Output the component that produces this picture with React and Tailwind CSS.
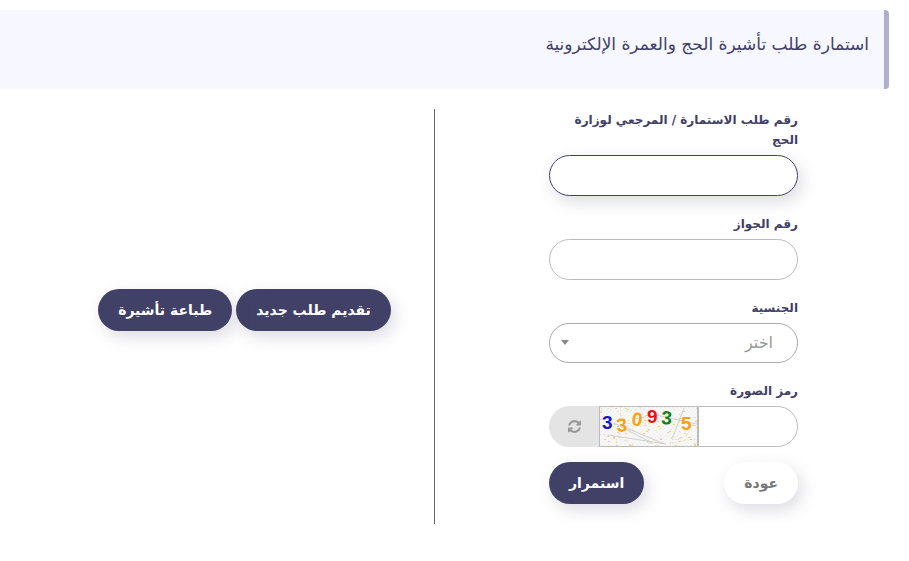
import React from "react";

const DIGITS = [
  { d: "3", x: 2, y: 22, fill: "#1414d2", rotate: 0 },
  { d: "3", x: 17, y: 25, fill: "#f5a314", rotate: -4 },
  { d: "0", x: 31, y: 18, fill: "#f5a314", rotate: 8 },
  { d: "9", x: 47, y: 16, fill: "#e61414", rotate: 0 },
  { d: "3", x: 61, y: 17, fill: "#128012", rotate: 4 },
  { d: "5", x: 81, y: 23, fill: "#f5a314", rotate: 0 },
];

function noise(n) {
  const v = Math.sin(n * 12.9898) * 43758.5453;
  return v - Math.floor(v);
}

const SPECKS = Array.from({ length: 230 }, (_, i) => ({
  x: Math.floor(noise(i + 1) * 97),
  y: Math.floor(noise(i + 501) * 39),
  w: 1 + (i % 2),
  o: 0.2 + (i % 4) * 0.14,
}));

function Captcha() {
  return (
    <svg viewBox="0 0 97 39" className="h-full w-full overflow-visible" role="img" aria-label="330935" direction="ltr">
      <defs>
        <pattern id="weave" width="4" height="4" patternUnits="userSpaceOnUse">
          <rect width="4" height="4" fill="#fafafa" />
          <path d="M0 0h2v2H0zM2 2h2v2H2z" fill="#f2f2f2" />
        </pattern>
      </defs>
      <rect width="97" height="39" fill="url(#weave)" />
      {SPECKS.map((s, i) => (
        <rect key={i} x={s.x} y={s.y} width={s.w} height="1" fill="#f2b84b" opacity={s.o} />
      ))}
      <g stroke="#cfcfcf" strokeWidth="1" fill="none">
        <path d="M8 28L66 37M14 16L52 36M24 20L62 36M84 1L72 32M56 8L97 17" />
      </g>
      <g fontFamily="Liberation Sans, Arial, sans-serif" fontWeight="700" fontSize="19">
        {DIGITS.map((g, i) => (
          <text key={i} x={g.x} y={g.y} fill={g.fill} transform={`rotate(${g.rotate} ${g.x} ${g.y})`}>
            {g.d}
          </text>
        ))}
      </g>
    </svg>
  );
}

function RefreshIcon() {
  return (
    <svg viewBox="0 0 1536 1536" className="size-[13px]" fill="#999" aria-hidden="true">
      <path d="M1511 928q0 5-1 7-64 268-268 434.500T764 1536q-146 0-282.500-55T238 1324l-129 129q-19 19-45 19t-45-19-19-45V960q0-26 19-45t45-19h448q26 0 45 19t19 45-19 45l-137 137q71 66 161 102t187 36q134 0 250-65t186-179q11-17 53-117 8-23 30-23h192q13 0 22.500 9.500T1511 928zM1536 128v448q0 26-19 45t-45 19h-448q-26 0-45-19t-19-45 19-45l138-138Q969 256 768 256q-134 0-250 65T332 500q-11 17-53 117-8 23-30 23H50q-13 0-22.500-9.500T18 608v-7q65-268 270-434.500T768 0q146 0 284 55.500T1297 212l130-129q19-19 45-19t45 19 19 45z" />
    </svg>
  );
}

function Field({ id, label, children }) {
  return (
    <div className="mb-[18px]">
      <label htmlFor={id} className="mb-[5px] block text-xs leading-5 font-bold text-[#414066]">
        {label}
      </label>
      {children}
    </div>
  );
}

function PrimaryButton({ children, type = "button" }) {
  return (
    <button
      type={type}
      className="h-[42px] rounded-full bg-[#414066] px-5 text-sm font-bold whitespace-nowrap text-white shadow-[4px_6px_16px_rgba(65,64,102,0.18)]"
    >
      {children}
    </button>
  );
}

export default function App() {
  return (
    <div dir="rtl" className="bg-white pt-2.5 font-['DejaVu_Sans',sans-serif]">
      <header className="mr-5 h-[79px] rounded-r border-r-[5px] border-[#b0aecd] bg-[#f6f7ff] px-[15px] pt-6">
        <h1 className="text-[17px] leading-5 text-[#414066]">استمارة طلب تأشيرة الحج والعمرة الإلكترونية</h1>
      </header>

      <main className="mt-5 grid grid-cols-[474fr_435fr]">
        <form className="pt-px pr-[111px] pb-5 pl-[114px]" onSubmit={(e) => e.preventDefault()}>
          <Field id="application" label="رقم طلب الاستمارة / المرجعي لوزارة الحج">
            <input
              id="application"
              type="text"
              className="block h-[41px] w-full rounded-full border border-[#414066] bg-white px-6 text-base shadow-[4px_6px_16px_rgba(65,64,102,0.18)] outline-none"
            />
          </Field>
          <Field id="passport" label="رقم الجواز">
            <input
              id="passport"
              type="text"
              className="block h-[41px] w-full rounded-full border border-[#bbb] bg-white px-6 text-base outline-none"
            />
          </Field>
          <Field id="nationality" label="الجنسية">
            <div className="relative">
              <select
                id="nationality"
                className="block h-10 w-full appearance-none rounded-full border border-[#aaa] bg-white px-6 text-base text-[#999] outline-none"
              >
                <option>اختر</option>
              </select>
              <svg viewBox="0 0 8 5" className="pointer-events-none absolute top-[17px] left-3 h-[5px] w-2" aria-hidden="true">
                <path d="M0 0h8L4 5z" fill="#888" />
              </svg>
            </div>
          </Field>
          <div className="mb-[15px]">
            <label htmlFor="captcha" className="mb-[5px] block text-xs leading-5 font-bold text-[#414066]">
              رمز الصورة
            </label>
            <div className="flex h-[41px]">
              <input
                id="captcha"
                type="text"
                className="w-0 min-w-0 flex-1 rounded-r-full border border-[#bbb] bg-white px-4 text-base outline-none"
              />
              <div className="w-[99px] border border-[#bbb]">
                <Captcha />
              </div>
              <button
                type="button"
                aria-label="تحديث الرمز"
                className="flex w-[50px] items-center justify-center rounded-l-full bg-[#e4e4e4]"
              >
                <RefreshIcon />
              </button>
            </div>
          </div>
          <div className="flex justify-between">
            <button
              type="button"
              className="h-[42px] rounded-full bg-white px-5 text-sm font-bold text-[#777] shadow-[4px_6px_16px_rgba(65,64,102,0.18)]"
            >
              عودة
            </button>
            <PrimaryButton type="submit">استمرار</PrimaryButton>
          </div>
        </form>

        <section className="flex items-center justify-center gap-1 border-r border-[#666] pr-[43px] pl-[98px] pb-3.5">
          <PrimaryButton>تقديم طلب جديد</PrimaryButton>
          <PrimaryButton>طباعة تأشيرة</PrimaryButton>
        </section>
      </main>
    </div>
  );
}
